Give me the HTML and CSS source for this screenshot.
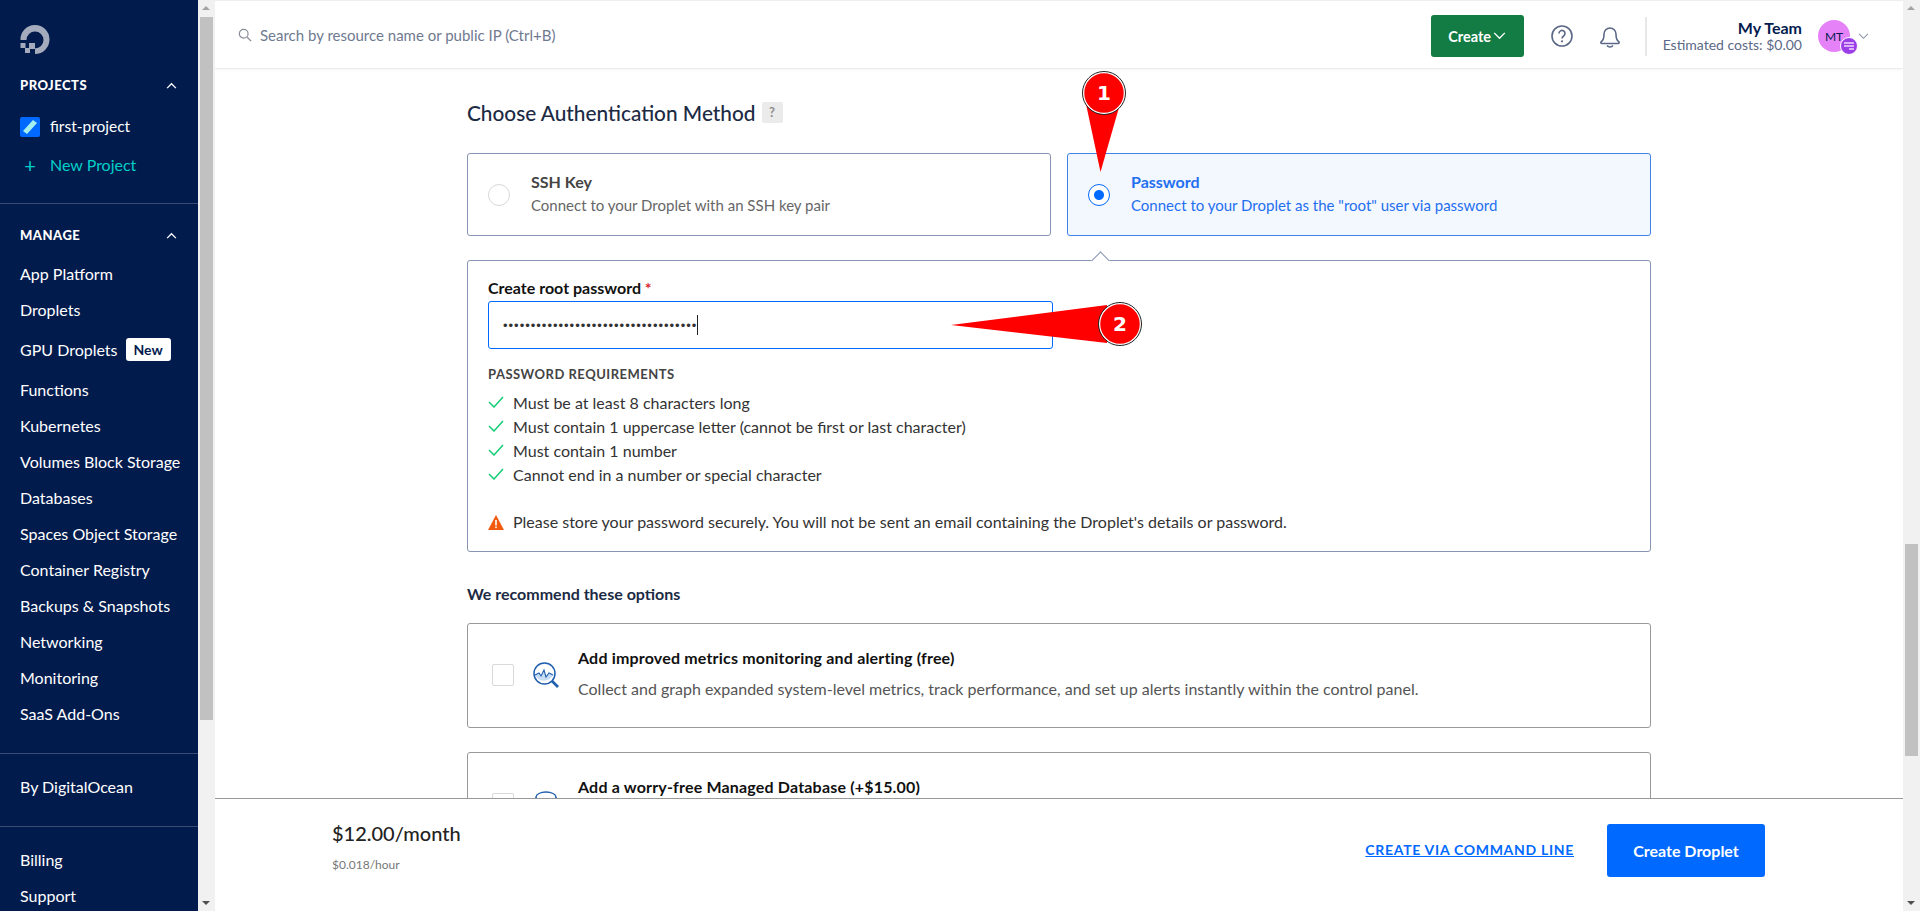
FILE: index.html
```html
<!DOCTYPE html>
<html lang="en">
<head>
  <meta charset="UTF-8" />
  <title>Create Droplet</title>
  <link rel="stylesheet" href="styles.css">
</head>
<body>
  <aside class="sidebar">
    <svg class="logo" viewBox="0 0 30 30" width="30" height="30">
      <path d="M15 29v-5.500a8.500 8.500 0 1 0-8.500-8.500H.5a14.500 14.500 0 1 1 14.500 14z" fill="#a3abbd"/>
      <rect x="9" y="18" width="6" height="6" fill="#a3abbd"/>
      <rect x="5" y="23" width="5" height="5" fill="#a3abbd"/>
      <rect x="0.500" y="18" width="5" height="5" fill="#a3abbd"/>
    </svg>
    <div class="nav-head">PROJECTS
      <svg viewBox="0 0 12 8" width="11" height="7"><path d="M1 7l5-5 5 5" fill="none" stroke="#fff" stroke-width="1.5"/></svg>
    </div>
    <div class="project">
      <svg viewBox="0 0 20 20" width="20" height="20"><rect width="20" height="20" rx="2" fill="#0069ff"/><path d="M3 14L13 3l4 3L7 17z" fill="#a5f0ee"/></svg>
      <span class="project-name">first-project</span>
    </div>
    <div class="project new-project"><span class="plus">+</span> <span class="project-name">New Project</span></div>
    <hr>
    <div class="nav-head manage">MANAGE
      <svg viewBox="0 0 12 8" width="11" height="7"><path d="M1 7l5-5 5 5" fill="none" stroke="#fff" stroke-width="1.5"/></svg>
    </div>
    <nav class="nav-list">
      <a>App Platform</a>
      <a>Droplets</a>
      <a class="gpu">GPU Droplets <span class="badge">New</span></a>
      <a>Functions</a>
      <a>Kubernetes</a>
      <a>Volumes Block Storage</a>
      <a>Databases</a>
      <a>Spaces Object Storage</a>
      <a>Container Registry</a>
      <a>Backups &amp; Snapshots</a>
      <a>Networking</a>
      <a>Monitoring</a>
      <a>SaaS Add-Ons</a>
    </nav>
    <hr>
    <nav class="nav-list"><a>By DigitalOcean</a></nav>
    <hr>
    <nav class="nav-list"><a>Billing</a><a>Support</a></nav>
  </aside>

  <div class="rail">
    <span class="arrow up"></span>
    <span class="thumb side-thumb"></span>
    <span class="arrow down"></span>
  </div>

  <div class="main">
    <header class="topbar">
      <svg class="search-icon" viewBox="0 0 16 16" width="14" height="14"><circle cx="6.5" cy="6.5" r="5" fill="none" stroke="#8a8f99" stroke-width="1.4"/><path d="M10.5 10.5L15 15" stroke="#8a8f99" stroke-width="1.6"/></svg>
      <span class="search-text">Search by resource name or public IP (Ctrl+B)</span>
      <button class="create-btn">Create
        <svg viewBox="0 0 14 9" width="13" height="8"><path d="M1 1l6 6 6-6" fill="none" stroke="#fff" stroke-width="1.5"/></svg>
      </button>
      <svg class="top-icon help" viewBox="0 0 24 24" width="24" height="24"><circle cx="12" cy="12" r="10" fill="none" stroke="#5b6987" stroke-width="1.6"/><path d="M9 9.5a3 3 0 1 1 4.6 2.5c-1 .7-1.600 1.200-1.600 2.400" fill="none" stroke="#5b6987" stroke-width="1.6"/><circle cx="12" cy="17.3" r="1.1" fill="#5b6987"/></svg>
      <svg class="top-icon" viewBox="0 0 24 26" width="24" height="26"><path d="M3 19c2-2 3-3 3-8a6 6 0 0 1 12 0c0 5 1 6 3 8 .5.8 0 1.500-1 1.500H4c-1 0-1.500-.7-1-1.500zM9 22.500c1.500 2 4.500 2 6 0" fill="none" stroke="#5b6987" stroke-width="1.6"/></svg>
      <div class="team">
        <strong>My Team</strong>
        <span>Estimated costs: $0.00</span>
      </div>
      <div class="avatar">MT
        <svg class="avatar-mini" viewBox="0 0 18 18" width="18" height="18"><circle cx="9" cy="9" r="8.500" fill="#9b3ee8" stroke="#fff"/><path d="M4 6h10M4 9h10M9 12h5" stroke="#f0d8ff" stroke-width="1.600"/></svg>
      </div>
      <svg class="team-caret" viewBox="0 0 12 8" width="11" height="7"><path d="M1 1l5 5 5-5" fill="none" stroke="#8a93a6" stroke-width="1.200"/></svg>
    </header>

    <main class="content">
      <h2 class="section-title">Choose Authentication Method <span class="help-chip">?</span></h2>

      <div class="auth-row">
        <div class="auth-card">
          <span class="radio"></span>
          <div class="auth-text">
            <div class="auth-name">SSH Key</div>
            <div class="auth-desc">Connect to your Droplet with an SSH key pair</div>
          </div>
        </div>
        <div class="auth-card selected">
          <span class="radio on"></span>
          <div class="auth-text">
            <div class="auth-name">Password</div>
            <div class="auth-desc">Connect to your Droplet as the "root" user via password</div>
          </div>
        </div>
      </div>

      <section class="panel">
        <span class="panel-caret"></span>
        <label class="field-label">Create root password <em>*</em></label>
        <div class="password-input"><span class="dots">•••••••••••••••••••••••••••••••••••</span><span class="text-caret"></span></div>
        <div class="req-head">PASSWORD REQUIREMENTS</div>
        <ul class="req-list">
          <li><svg viewBox="0 0 16 12" width="16" height="12"><path d="M1 6l5 5 9-10" fill="none" stroke="#15cd72" stroke-width="1.500"/></svg>Must be at least 8 characters long</li>
          <li><svg viewBox="0 0 16 12" width="16" height="12"><path d="M1 6l5 5 9-10" fill="none" stroke="#15cd72" stroke-width="1.500"/></svg>Must contain 1 uppercase letter (cannot be first or last character)</li>
          <li><svg viewBox="0 0 16 12" width="16" height="12"><path d="M1 6l5 5 9-10" fill="none" stroke="#15cd72" stroke-width="1.500"/></svg>Must contain 1 number</li>
          <li><svg viewBox="0 0 16 12" width="16" height="12"><path d="M1 6l5 5 9-10" fill="none" stroke="#15cd72" stroke-width="1.500"/></svg>Cannot end in a number or special character</li>
        </ul>
        <p class="warning">
          <svg viewBox="0 0 16 15" width="16" height="15"><path d="M8 0l8 15H0z" fill="#f25a0f"/><rect x="7.200" y="5" width="1.600" height="5.500" fill="#fff"/><rect x="7.200" y="11.500" width="1.600" height="1.600" fill="#fff"/></svg>
          Please store your password securely. You will not be sent an email containing the Droplet's details or password.
        </p>
      </section>

      <h3 class="rec-title">We recommend these options</h3>

      <div class="rec-card">
        <span class="checkbox"></span>
        <svg class="rec-icon" viewBox="0 0 27 27" width="27" height="27">
          <circle cx="11.500" cy="11.500" r="10.500" fill="#fff" stroke="#1f5fae" stroke-width="1.500"/>
          <path d="M2 13l4-2 2 3 3-6 2 7 3-4 4 2a10 10 0 0 1-18 0z" fill="#c7dcf5"/>
          <path d="M2 13l4-2 2 3 3-6 2 7 3-4 4 2" fill="none" stroke="#1f5fae" stroke-width="1.100"/>
          <path d="M19 19l6 6" stroke="#1f5fae" stroke-width="2.600"/>
        </svg>
        <div>
          <div class="rec-name">Add improved metrics monitoring and alerting (free)</div>
          <div class="rec-desc">Collect and graph expanded system-level metrics, track performance, and set up alerts instantly within the control panel.</div>
        </div>
      </div>

      <div class="rec-card">
        <span class="checkbox"></span>
        <svg class="rec-icon" viewBox="0 0 27 27" width="27" height="27">
          <ellipse cx="13" cy="6" rx="10" ry="5" fill="#fff" stroke="#1f5fae" stroke-width="1.300"/>
          <path d="M3 6v16M23 6v16" stroke="#1f5fae" stroke-width="1.300"/>
        </svg>
        <div>
          <div class="rec-name">Add a worry-free Managed Database (+$15.00)</div>
        </div>
      </div>
    </main>

    <footer class="bottombar">
      <div class="price">
        <div class="price-month">$12.00/month</div>
        <div class="price-hour">$0.018/hour</div>
      </div>
      <a class="cli-link">CREATE VIA COMMAND LINE</a>
      <button class="droplet-btn">Create Droplet</button>
    </footer>
  </div>

  <div class="rail">
    <span class="arrow up"></span>
    <span class="thumb main-thumb"></span>
    <span class="arrow down"></span>
  </div>

  <svg class="marker marker-one" viewBox="0 0 50 110" width="50" height="110">
    <path d="M5 34L39 34L19.500 102z" fill="#f00"/>
    <circle cx="23" cy="23" r="20.500" fill="#f00" stroke="#fff" stroke-width="1.500"/>
    <circle cx="23" cy="23" r="21.500" fill="none" stroke="#222" stroke-width="1"/>
    <text x="23" y="30" class="marker-num">1</text>
  </svg>
  <svg class="marker marker-two" viewBox="0 0 200 50" width="200" height="50">
    <path d="M0 25L156 5L156 43z" fill="#f00"/>
    <circle cx="169" cy="24" r="20.500" fill="#f00" stroke="#fff" stroke-width="1.500"/>
    <circle cx="169" cy="24" r="21.500" fill="none" stroke="#222" stroke-width="1"/>
    <text x="169" y="31" class="marker-num">2</text>
  </svg>
</body>
</html>
```

FILE: styles.css
```css
* {
  box-sizing: border-box;
}

html, body {
  height: 100%;
}

body {
  margin: 0;
  display: flex;
  overflow: hidden;
  height: 911px;
  background-color: #fff;
  color: #031b4e;
  font-family: Lato, "Liberation Sans", sans-serif;
  font-size: 16px;
}

/* sidebar */
.sidebar {
  width: 198px;
  flex: none;
  height: 911px;
  overflow: hidden;
  padding-top: 25px;
  background-color: #021b4d;
  color: #fff;
}

.logo {
  display: block;
  margin-left: 20px;
}

.nav-head {
  display: flex;
  justify-content: space-between;
  align-items: center;
  height: 20px;
  margin-top: 20px;
  padding: 0 21px 0 20px;
  font-size: 13px;
  font-weight: 900;
  letter-spacing: 0.5px;
}

.nav-head.manage {
  margin-top: 21px;
}

.project {
  display: flex;
  align-items: center;
  gap: 10px;
  height: 20px;
  margin-top: 22px;
  padding-left: 20px;
  font-size: 15.500px;
}

.project-name {
  padding-bottom: 2px;
}

.new-project {
  margin-top: 18px;
  color: #00cfc8;
  font-size: 16px;
}

.plus {
  width: 20px;
  text-align: center;
  font-size: 20px;
  line-height: 20px;
}

.sidebar hr {
  border: none;
  border-top: 1px solid #3a4c73;
  margin: 0;
}

.new-project + hr {
  margin-top: 28px;
}

.nav-list {
  display: flex;
  flex-direction: column;
  padding: 14px 0 22px;
}

.nav-list a {
  display: flex;
  align-items: center;
  height: 36px;
  padding-left: 20px;
}

.nav-list a.gpu {
  height: 44px;
  gap: 8px;
}

.manage + .nav-list {
  padding-top: 10px;
}

.badge {
  padding: 3px 8px;
  border-radius: 3px;
  background-color: #fff;
  color: #031b4e;
  font-size: 14px;
  font-weight: 700;
}

/* fake scrollbars */
.rail {
  position: relative;
  width: 17px;
  flex: none;
  height: 911px;
  background-color: #f1f1f1;
}

.thumb {
  display: block;
  margin: 0 2px;
  background-color: #c1c1c1;
}

.side-thumb {
  height: 703px;
}

.main-thumb {
  height: 212px;
  margin-top: 527px;
}

.arrow {
  display: block;
  height: 17px;
  position: relative;
}

.arrow.up::after,
.arrow.down::after {
  content: "";
  position: absolute;
  left: 4px;
  border-left: 4px solid transparent;
  border-right: 4px solid transparent;
}

.arrow.up::after {
  top: 6px;
  border-bottom: 4px solid #a3a3a3;
}

.arrow.down {
  position: absolute;
  bottom: 0;
  left: 0;
  width: 17px;
}

.arrow.down::after {
  top: 7px;
  border-top: 4px solid #505050;
}

/* main column */
.main {
  flex: 1;
  min-width: 0;
  height: 911px;
  display: flex;
  flex-direction: column;
}

.topbar {
  display: flex;
  align-items: center;
  flex: none;
  height: 69px;
  padding: 3px 0 0 23px;
  border-top: 1px solid #eee;
  border-bottom: 1px solid #ececec;
  box-shadow: 0 1px 3px rgba(0, 0, 0, 0.04);
}

.search-icon {
  margin-bottom: 2px;
}

.search-text {
  margin-left: 8px;
  padding-bottom: 2px;
  color: #6f7a90;
  font-size: 15px;
}

.create-btn {
  display: flex;
  align-items: center;
  justify-content: center;
  gap: 2px;
  width: 93px;
  height: 42px;
  margin-left: auto;
  border: none;
  border-radius: 3px;
  background-color: #137c45;
  color: #fff;
  font-family: inherit;
  font-size: 14.500px;
  font-weight: 700;
}

.top-icon {
  margin-left: 24px;
}

.help {
  margin-left: 26px;
}

.team {
  display: flex;
  flex-direction: column;
  align-items: flex-end;
  justify-content: center;
  height: 39px;
  margin-left: 23px;
  padding-left: 16px;
  border-left: 2px solid #e7e7e7;
  line-height: 17px;
}

.team strong {
  font-size: 16px;
}

.team span {
  color: #5b6987;
  font-size: 14px;
}

.avatar {
  position: relative;
  display: flex;
  align-items: center;
  justify-content: center;
  width: 32px;
  height: 32px;
  margin-left: 16px;
  border-radius: 50%;
  background-color: #e682f7;
  font-size: 12px;
}

.avatar-mini {
  position: absolute;
  right: -8px;
  bottom: -3px;
}

.team-caret {
  margin: 0 34px 0 8px;
}

.content {
  flex: 1;
  min-height: 0;
  overflow: hidden;
  padding: 30px 252px 0;
}

.section-title {
  display: flex;
  align-items: center;
  gap: 6px;
  height: 26px;
  margin: 0 0 28px;
  color: #1c2a44;
  font-size: 20.800px;
  font-weight: 500;
}

.help-chip {
  width: 21px;
  height: 21px;
  border-radius: 2px;
  background-color: #ebebeb;
  color: #8d8d8d;
  font-size: 13px;
  font-weight: 700;
  line-height: 21px;
  text-align: center;
}

.auth-row {
  display: flex;
  gap: 16px;
}

.auth-card {
  flex: 1;
  display: flex;
  align-items: center;
  gap: 21px;
  height: 83px;
  padding-left: 20px;
  border: 1px solid #8794b3;
  border-radius: 3px;
}

.auth-card.selected {
  border-color: #3f83ea;
  background-color: #f3f7fe;
  color: #0069ff;
}

.auth-text {
  padding-bottom: 3px;
}

.radio {
  flex: none;
  width: 22px;
  height: 22px;
  border: 1px solid #d9d9d9;
  border-radius: 50%;
  background-color: #fff;
}

.radio.on {
  border-color: #0069ff;
  border-width: 1.5px;
  background: radial-gradient(circle, #0069ff 0, #0069ff 4.500px, #fff 5.500px);
}

.auth-name {
  margin-bottom: 1px;
  color: #444;
  font-weight: 700;
  line-height: 23px;
}

.auth-desc {
  color: #666;
  font-size: 15px;
  line-height: 23px;
}

.selected .auth-name,
.selected .auth-desc {
  color: #1f6ff0;
}

.panel {
  position: relative;
  height: 292px;
  margin-top: 24px;
  padding: 17px 20px 0;
  border: 1px solid #8794b3;
  border-radius: 3px;
}

.panel-caret {
  position: absolute;
  top: -7px;
  left: 626px;
  width: 13px;
  height: 13px;
  border-top: 1px solid #8794b3;
  border-left: 1px solid #8794b3;
  background-color: #fff;
  transform: rotate(45deg);
}

.field-label {
  display: block;
  color: #111;
  font-weight: 700;
  line-height: 20px;
}

.field-label em {
  color: #d8232a;
  font-style: normal;
}

.password-input {
  display: flex;
  align-items: center;
  width: 565px;
  height: 48px;
  margin-top: 3px;
  padding-left: 14px;
  border: 1px solid #0069ff;
  border-radius: 3px;
}

.dots {
  color: #333;
  font-family: "Liberation Sans", sans-serif;
  font-size: 13px;
  letter-spacing: 1px;
}

.text-caret {
  width: 1px;
  height: 20px;
  background-color: #222;
}

.req-head {
  margin-top: 17px;
  color: #444;
  font-size: 13px;
  font-weight: 700;
  letter-spacing: 0.5px;
  line-height: 16px;
}

.req-list {
  margin: 8px 0 0;
  padding: 0;
  list-style: none;
}

.req-list li {
  display: flex;
  align-items: center;
  gap: 9px;
  height: 24px;
  color: #333;
}

.warning {
  display: flex;
  align-items: center;
  gap: 9px;
  margin: 24px 0 0;
  color: #333;
  line-height: 24px;
}

.rec-title {
  margin: 32px 0 19px;
  color: #1c2a44;
  font-size: 16px;
  font-weight: 700;
  line-height: 20px;
}

.rec-card {
  display: flex;
  align-items: flex-start;
  height: 105px;
  margin-bottom: 24px;
  padding: 22px 0 0 24px;
  border: 1px solid #999;
  border-radius: 3px;
}

.checkbox {
  flex: none;
  width: 22px;
  height: 22px;
  margin-top: 18px;
  border: 1px solid #d9d9d9;
  border-radius: 2px;
}

.rec-icon {
  flex: none;
  margin: 16px 18px 0 19px;
}

.rec-name {
  color: #111;
  font-weight: 700;
  letter-spacing: 0.18px;
  line-height: 24px;
}

.rec-desc {
  margin-top: 7px;
  color: #555;
  line-height: 24px;
}

.bottombar {
  display: flex;
  align-items: center;
  flex: none;
  height: 113px;
  padding: 0 138px 9px 117px;
  border-top: 1px solid #999;
  background-color: #fff;
}

.price {
  margin-bottom: 9px;
}

.price-month {
  color: #222;
  font-size: 20px;
  font-weight: 500;
}

.price-hour {
  margin-top: 12px;
  color: #777;
  font-size: 12px;
}

.cli-link {
  margin-left: auto;
  margin-bottom: 2px;
  color: #0069ff;
  font-size: 14px;
  font-weight: 700;
  letter-spacing: 0.7px;
  text-decoration: underline;
}

.droplet-btn {
  width: 158px;
  height: 53px;
  margin-left: 33px;
  border: none;
  border-radius: 3px;
  background-color: #0069ff;
  color: #fff;
  font-family: inherit;
  font-size: 16px;
  font-weight: 700;
}

/* red callouts drawn on top of the screenshot */
.marker {
  position: absolute;
  overflow: visible;
}

.marker-one {
  left: 1081px;
  top: 70px;
}

.marker-two {
  left: 951px;
  top: 300px;
}

.marker-num {
  fill: #fff;
  font-family: "DejaVu Sans", sans-serif;
  font-size: 20px;
  font-weight: 700;
  text-anchor: middle;
}
```
